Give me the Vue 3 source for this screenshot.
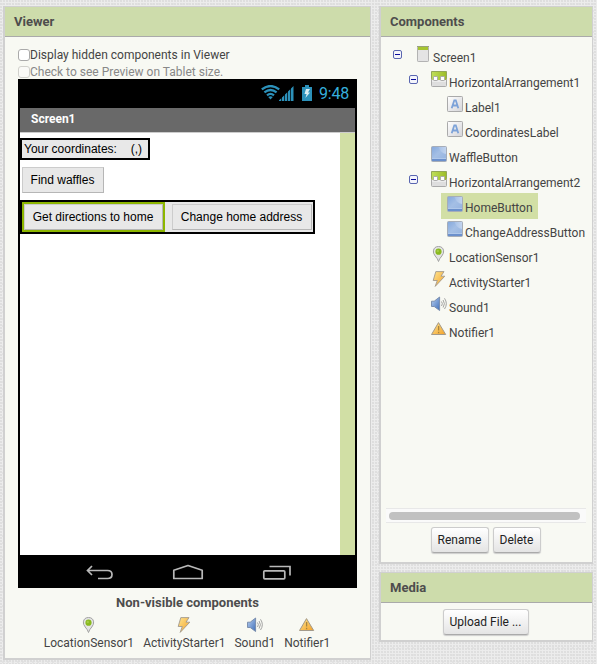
<script setup>
const tree = [
  { name: 'Screen1', icon: 'screen', depth: 0, open: true },
  { name: 'HorizontalArrangement1', icon: 'arrangement', depth: 1, open: true },
  { name: 'Label1', icon: 'label', depth: 2 },
  { name: 'CoordinatesLabel', icon: 'label', depth: 2 },
  { name: 'WaffleButton', icon: 'button', depth: 1 },
  { name: 'HorizontalArrangement2', icon: 'arrangement', depth: 1, open: true },
  { name: 'HomeButton', icon: 'button', depth: 2, selected: true },
  { name: 'ChangeAddressButton', icon: 'button', depth: 2 },
  { name: 'LocationSensor1', icon: 'location', depth: 1 },
  { name: 'ActivityStarter1', icon: 'activity', depth: 1 },
  { name: 'Sound1', icon: 'sound', depth: 1 },
  { name: 'Notifier1', icon: 'notifier', depth: 1 },
]
const nonVisible = tree.slice(8)
</script>

<template>
  <div class="page">
    <svg class="defs" width="0" height="0" aria-hidden="true">
      <defs>
        <linearGradient id="g-grey" x1="0" y1="0" x2="1" y2="1"><stop offset="0" stop-color="#fff" /><stop offset="1" stop-color="#d4d4d8" /></linearGradient>
        <linearGradient id="g-green" x1="0" y1="0" x2="1" y2="0"><stop offset="0" stop-color="#bede58" /><stop offset="1" stop-color="#9dbd28" /></linearGradient>
        <linearGradient id="g-blue" x1="0" y1="0" x2="1" y2="1"><stop offset="0" stop-color="#84a8dc" /><stop offset=".45" stop-color="#a4bfe5" /><stop offset="1" stop-color="#94b2df" /></linearGradient>
        <linearGradient id="g-shine" x1="0" y1="0" x2="1" y2="0"><stop offset="0" stop-color="#a9c3e8" /><stop offset="1" stop-color="#cddcf2" /></linearGradient>
        <linearGradient id="g-bolt" x1="0" y1="0" x2="1" y2="1"><stop offset="0" stop-color="#ffe58f" /><stop offset="1" stop-color="#f2a12a" /></linearGradient>
        <linearGradient id="g-sound" x1="0" y1="0" x2="1" y2="1"><stop offset="0" stop-color="#b9d0f0" /><stop offset="1" stop-color="#3f6fba" /></linearGradient>
      </defs>
      <symbol id="screen" viewBox="0 0 16 16">
        <rect x="2.5" y=".5" width="11" height="15" rx=".7" fill="#e4e4e4" stroke="#b3b3b3" />
        <rect x="2" y="0" width="12" height="1" fill="#98a279" /><rect x="3" y="1" width="10" height="3" fill="#a6c530" />
      </symbol>
      <symbol id="arrangement" viewBox="0 0 16 16">
        <rect x=".5" y=".5" width="15" height="15" rx="1" fill="#dedede" stroke="#aaa" />
        <rect x="0" y="0" width="16" height="8" rx="1" fill="#93a757" />
        <rect x="1" y="1" width="14" height="8" fill="url(#g-green)" />
        <rect x="1" y="9" width="14" height="2" fill="#ececec" />
        <rect x="2.5" y="5.5" width="4" height="4" rx=".6" fill="#fff" stroke="#aaa" /><rect x="9.5" y="5.5" width="4" height="4" rx=".6" fill="#fff" stroke="#aaa" />
      </symbol>
      <symbol id="label" viewBox="0 0 16 16">
        <rect x=".5" y=".5" width="15" height="15" rx=".8" fill="url(#g-grey)" stroke="#aaa" />
        <path d="M4.7 12.2 7.3 4.3H8.8L11.3 12.2M5.7 9.5H10.3" fill="none" stroke="#7ca2d8" stroke-width="1.8" />
      </symbol>
      <symbol id="button" viewBox="0 0 16 16">
        <rect x=".5" y=".5" width="15" height="15" rx="1" fill="url(#g-blue)" stroke="#a6adb8" />
        <path d="M7.5 1H15V8Q9.5 7 7.5 1Z" fill="url(#g-shine)" opacity=".75" />
        <rect x="1" y="12" width="14" height="1" fill="#b0c8ea" /><rect x="1" y="13" width="14" height="2" fill="#6b90cc" />
      </symbol>
      <symbol id="location" viewBox="0 0 16 16">
        <path d="M7.5 15.5Q6.7 12.7 4.2 10Q2 7.3 2.4 4.8Q3.1.5 7.5.5Q11.9.5 12.6 4.8Q13 7.3 10.8 10Q8.3 12.7 7.5 15.5Z" fill="#e4e4e4" stroke="#a2a2a2" />
        <circle cx="7.5" cy="5.7" r="3.1" fill="#89b91f" /><circle cx="6.8" cy="5" r="1.2" fill="#a2cb43" />
      </symbol>
      <symbol id="activity" viewBox="0 0 16 16">
        <path d="M4.8.6H13L10 5.2H13.8L4.2 15.4L6.3 9.5H2.2Z" fill="url(#g-bolt)" stroke="#a19a8e" stroke-width=".9" />
      </symbol>
      <symbol id="sound" viewBox="0 0 16 16">
        <path d="M.5 5.2H3.2L8.6 1V14.5L3.2 10.5H.5Z" fill="url(#g-sound)" stroke="#7488a8" stroke-width=".9" />
        <path d="M10.5 5.5Q12.2 7.7 10.5 10M12.1 4Q14.7 7.7 12.1 11.5M13.5 2.3Q17.2 7.7 13.5 13" fill="none" stroke="#999" stroke-width=".9" />
      </symbol>
      <symbol id="notifier" viewBox="0 0 16 16">
        <path d="M7.5 1.6 14.7 13.5H.5Z" fill="url(#g-bolt)" stroke="#a39a8b" stroke-linejoin="round" />
        <path d="M7.6 5V9.6M7.6 10.8V12.3" stroke="#a8853f" stroke-width="1.3" />
      </symbol>
    </svg>

    <section class="panel viewer">
      <h2>Viewer</h2>
      <div class="viewer-body">
        <div class="option"><i class="check"></i><span>Display hidden components in Viewer</span></div>
        <div class="option disabled"><i class="check"></i><span>Check to see Preview on Tablet size.</span></div>
        <div class="phone">
          <div class="status">
            <svg width="19" height="15" viewBox="0 0 19 15"><g fill="none" stroke="#2c91ba" stroke-width="2.3"><path d="M.8 4.4Q9.5-2.3 18.2 4.4M3.4 7.4Q9.5 2.6 15.6 7.4M6 10.3Q9.5 7.4 13 10.3" /></g><path d="M7.2 12 9.5 14.5 11.8 12Q9.5 10.5 7.2 12Z" fill="#2c91ba" /></svg>
            <svg class="signal" width="15" height="15" viewBox="0 0 15 15" fill="#2c91ba"><path d="M0 15V14.3L2.3 12.2V15ZM3 15V11.5L5.3 9.2V15ZM6 15V8.5L8.3 6.2V15ZM9 15V5.5L11.3 3.2V15ZM12 15V2.5L14.5 0V15Z" /></svg>
            <svg class="battery" width="10" height="16" viewBox="0 0 10 16"><path d="M0 2H3V0H7V2H10V16H0Z" fill="#2c91ba" /><path d="M4 4H8L6 7.5H8L3.4 13L4.6 9H2.5Z" fill="#d9edf3" /></svg>
            <span class="clock">9:48</span>
          </div>
          <div class="title"><span>Screen1</span></div>
          <div class="canvas">
            <div class="form">
              <div class="arr coords"><span>Your coordinates:</span><span>(,)</span></div>
              <button class="abtn waffles">Find waffles</button>
              <div class="arr buttons">
                <div class="chosen"><button class="abtn">Get directions to home</button></div>
                <button class="abtn change">Change home address</button>
              </div>
            </div>
            <div class="gutter"></div>
          </div>
          <div class="nav">
            <svg width="209" height="20" viewBox="0 0 209 20" fill="none" stroke="#b9b9b9" stroke-width="1.7">
              <path d="M7 3 2.5 7.5 7 12M3 7.5H22.5Q27 7.5 27 11.5Q27 15.5 22.5 15.5H13" />
              <path d="M88.8 15.5V7.2L103 2.5L117.2 7.2V15.5Z" stroke-linejoin="round" />
              <rect x="178.8" y="7.8" width="21" height="8" rx="1" /><path d="M184.5 3.5H205V12.5" />
            </svg>
          </div>
        </div>
        <div class="nv-title">Non-visible components</div>
        <div class="nv">
          <div v-for="c in nonVisible" :key="c.name" class="nv-item">
            <svg width="16" height="16"><use :href="'#' + c.icon" /></svg>
            <span>{{ c.name }}</span>
          </div>
        </div>
      </div>
    </section>

    <div class="side">
      <section class="panel components">
        <h2>Components</h2>
        <div class="tree">
          <div v-for="n in tree" :key="n.name" class="row" :class="'d' + n.depth">
            <span class="toggle">
              <svg v-if="n.open" width="9" height="9" viewBox="0 0 9 9"><rect x=".5" y=".5" width="8" height="8" rx="1.5" fill="#f4f5fb" stroke="#5a66b0" /><path d="M2 4.5H7" stroke="#0b0b9c" /></svg>
            </span>
            <span class="node" :class="{ selected: n.selected }">
              <svg width="16" height="16"><use :href="'#' + n.icon" /></svg>
              <span class="name">{{ n.name }}</span>
            </span>
          </div>
        </div>
        <div class="hscroll"><i></i></div>
        <div class="actions"><button class="btn rename">Rename</button><button class="btn delete">Delete</button></div>
      </section>
      <section class="panel media">
        <h2>Media</h2>
        <div class="actions"><button class="btn upload">Upload File ...</button></div>
      </section>
    </div>
  </div>
</template>

<style>
body { margin: 0; }
</style>

<style scoped>
* { box-sizing: border-box; }
.page {
  width: 597px; height: 664px; padding: 6px 4px 0 3px; display: flex; gap: 8px; overflow: hidden;
  font-family: Roboto, sans-serif; font-size: 12px; color: #444;
  background-color: #ececec;
  background-image: radial-gradient(circle at 1px 1px, #dedede 0.7px, transparent 1px), radial-gradient(circle at 3px 4px, #e2e2e2 0.7px, transparent 1px);
  background-size: 3px 3px, 5px 7px;
}
.defs { position: absolute; }
svg { display: block; flex: none; }
button { font: inherit; margin: 0; padding: 0; white-space: nowrap; }
span { white-space: nowrap; }
.panel { background: #f8f9f3; border: 1px solid #d0d0d0; border-width: 1px 1px 2px 2px; }
.panel h2 { margin: 0; height: 30px; padding-left: 9px; background: #cddcab; border-bottom: 1px solid #aaa; font-size: 13px; font-weight: 700; line-height: 30px; color: #4d4d4d; }
.viewer { width: 368px; height: 654px; flex: none; }
.viewer-body { padding: 10px 0 0 13px; }
.option { height: 17px; display: flex; align-items: center; }
.option:first-child { height: 16px; }
.check { width: 12px; height: 12px; border: 1px solid #aaa; border-radius: 3px; background: #fff; }
.disabled { color: #888; }
.disabled .check { border-color: #d1d1cc; background: #fafaf7; }
.phone { width: 339px; height: 509px; background: #000; padding: 0 2px; margin-top: -1px; }
.status { height: 29px; display: flex; padding: 6px 5px 0 0; justify-content: flex-end; align-items: flex-start; }
.signal { margin: 1px 8px 0 -1px; }
.battery { margin-right: 7px; }
.clock { font-size: 16px; line-height: 18px; color: #36afdc; width: 31px; letter-spacing: -.2px; }
.title { height: 25px; padding-left: 11px; background: #696969; border-bottom: 1px solid #ccc; color: #fff; font-weight: 700; font-size: 12px; line-height: 23px; }
.canvas { height: 422px; display: flex; background: #fff; }
.form { flex: 1; padding-top: 5px; font-family: "Liberation Sans", Arial, sans-serif; font-size: 12px; color: #000; }
.gutter { width: 15px; background: #d1dfa5; }
.arr { border: 2px solid #000; background: #e8e8e8; display: flex; }
.coords { width: 130px; height: 22px; padding: 0 6px 0 2px; line-height: 18px; justify-content: space-between; }
.abtn { display: block; height: 26px; padding-right: 1px; background: #e8e8e8; border: 1px solid #ccc; border-right-color: #b6b6b6; border-bottom-color: #b6b6b6; color: #000; line-height: 23px; }
.waffles { width: 82px; margin: 7px 0 7px 2px; }
.buttons { width: 295px; height: 34px; }
.chosen { width: 143px; height: 30px; border: 2px solid #8db600; margin-right: 7px; }
.chosen .abtn { width: 139px; }
.change { width: 140px; margin-top: 2px; }
.nav { height: 33px; padding: 8px 0 0 65px; }
.nv-title { width: 339px; height: 26px; padding-top: 7px; text-align: center; font-size: 13px; line-height: 16px; font-weight: 700; color: #4d4d4d; }
.nv { width: 338px; display: flex; justify-content: center; gap: 9px; padding-top: 3px; }
.nv-item { display: flex; flex-direction: column; align-items: center; gap: 3px; line-height: 15px; }
.side { width: 214px; display: flex; flex-direction: column; gap: 8px; }
.components { height: 558px; }
.tree { height: 471px; padding: 6px 0 0 12px; }
.row { height: 25px; display: flex; align-items: flex-start; }
.d1 { padding-left: 16px; }
.d2 { padding-left: 32px; }
.toggle { width: 16px; flex: none; padding-top: 7px; }
.toggle svg { margin-left: 0; }
.node { height: 26px; display: flex; flex: none; gap: 2px; padding: 3px 5px 0 6px; }
.name { line-height: 16px; padding-top: 4px; }
.selected { background: #d2dfa5; }
.hscroll { height: 15px; margin: 0 6px 0 5px; border: 1px solid #e8e8e8; border-width: 1px 0; background: #fafafa; padding: 3px 6px 0 3px; }
.hscroll i { display: block; height: 8px; border-radius: 4px; background: #c1c1c1; }
.actions { display: flex; justify-content: center; gap: 4px; padding: 4px 2px 0 0; }
.btn { height: 26px; border: 1px solid #ccc; border-bottom-color: #aaa; border-radius: 3px; background: linear-gradient(#fff, #e4e4e4); color: #222; line-height: 23px; box-shadow: 0 1px 1px #ccc; }
.rename { width: 58px; }
.delete { width: 48px; }
.upload { width: 86px; }
.media { height: 70px; }
.media .actions { padding-top: 6px; }
</style>
